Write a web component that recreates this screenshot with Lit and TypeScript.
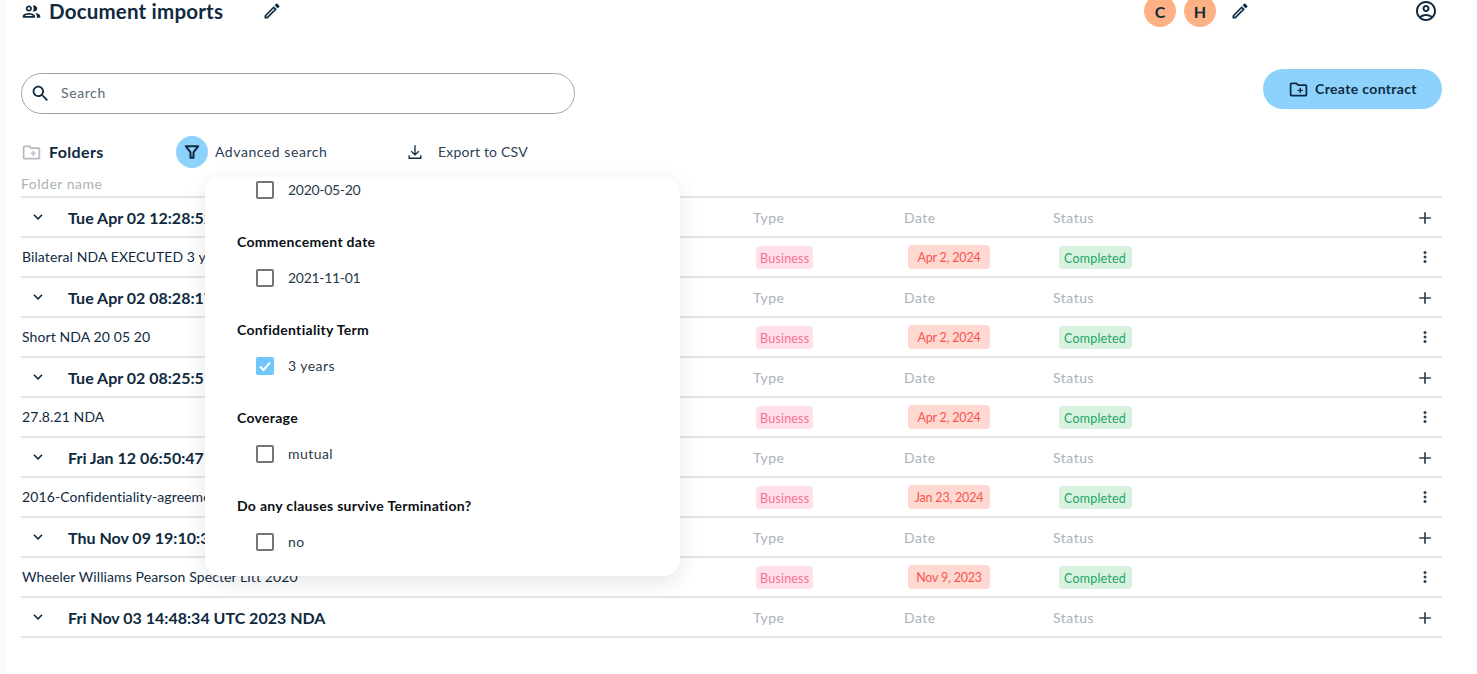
import { LitElement, html, svg, css } from "lit";
import { customElement } from "lit/decorators.js";

const icon = (content: unknown, size = 24) =>
  html`<svg class="icon" width=${size} height=${size} viewBox="0 0 24 24" fill="currentColor">${content}</svg>`;

const PEOPLE = svg`<path d="M9 13.75c-2.34 0-7 1.17-7 3.5V19h14v-1.75c0-2.33-4.66-3.5-7-3.5zM4.34 17c.84-.58 2.87-1.25 4.66-1.25s3.82.67 4.66 1.25H4.34zM9 12c1.93 0 3.5-1.57 3.5-3.5S10.93 5 9 5 5.5 6.57 5.5 8.5 7.07 12 9 12zm0-5c.83 0 1.5.67 1.5 1.5S9.83 10 9 10s-1.5-.67-1.5-1.5S8.17 7 9 7zm7.04 6.81c1.16.84 1.96 1.96 1.96 3.44V19h4v-1.75c0-2.02-3.5-3.17-5.96-3.44zM15 12c1.93 0 3.5-1.57 3.5-3.5S16.93 5 15 5c-.54 0-1.04.13-1.5.35.63.89 1 1.98 1 3.15s-.37 2.26-1 3.15c.46.22.96.35 1.5.35z"/>`;
const PENCIL = svg`<path d="M14.06 9.02l.92.92L5.92 19H5v-.92l9.06-9.06M17.66 3c-.25 0-.51.1-.7.29l-1.83 1.83 3.75 3.75 1.83-1.83c.39-.39.39-1.02 0-1.41l-2.34-2.34c-.2-.2-.45-.29-.71-.29zm-3.6 3.19L3 17.25V21h3.75L17.81 9.94l-3.75-3.75z"/>`;
const SEARCH = svg`<path d="M15.5 14h-.79l-.28-.27C15.41 12.59 16 11.11 16 9.5 16 5.91 13.09 3 9.5 3S3 5.91 3 9.5 5.91 16 9.5 16c1.61 0 3.09-.59 4.23-1.57l.27.28v.79l5 4.99L20.49 19l-4.99-5zm-6 0C7.01 14 5 11.99 5 9.5S7.01 5 9.5 5 14 7.01 14 9.5 11.99 14 9.5 14z"/>`;
const FUNNEL = svg`<path d="M4.5 5h15l-5.7 7.5V19h-3.6v-6.5z" fill="none" stroke="currentColor" stroke-width="2.4" stroke-linejoin="round"/>`;
const DOWNLOAD = svg`<path d="M12 4v11M7.5 11l4.5 4.5 4.5-4.500M5 16v3.5h14V16" fill="none" stroke="currentColor" stroke-width="1.6"/>`;
const FOLDER_PLUS = svg`<path d="M20 6h-8l-2-2H4c-1.1 0-2 .9-2 2v12c0 1.1.9 2 2 2h16c1.1 0 2-.9 2-2V8c0-1.1-.9-2-2-2zm0 12H4V6h5.17l2 2H20v10z"/><path d="M13.2 10h1.6v2.2H17v1.6h-2.2V16h-1.6v-2.2H11v-1.6h2.2z"/>`;
const CHEVRON = svg`<path d="M6.5 9l5.5 5.5L17.5 9" fill="none" stroke="currentColor" stroke-width="2"/>`;
const PLUS = svg`<path d="M19 13h-6v6h-2v-6H5v-2h6V5h2v6h6v2z"/>`;
const DOTS = svg`<circle cx="12" cy="6" r="2"/><circle cx="12" cy="12" r="2"/><circle cx="12" cy="18" r="2"/>`;
const ACCOUNT = svg`<path d="M12 2C6.48 2 2 6.48 2 12s4.48 10 10 10 10-4.48 10-10S17.52 2 12 2zM7.35 18.5C8.66 17.56 10.26 17 12 17s3.34.56 4.65 1.5c-1.31.94-2.91 1.5-4.65 1.5s-3.34-.56-4.65-1.5zm10.79-1.38C16.45 15.8 14.32 15 12 15s-4.45.8-6.14 2.12C4.7 15.73 4 13.95 4 12c0-4.42 3.58-8 8-8s8 3.58 8 8c0 1.95-.7 3.73-1.86 5.12z"/><path d="M12 6c-1.93 0-3.5 1.57-3.5 3.5S10.07 13 12 13s3.5-1.57 3.5-3.5S13.93 6 12 6zm0 5c-.83 0-1.5-.67-1.5-1.5S11.17 8 12 8s1.5.67 1.5 1.5S12.83 11 12 11z"/>`;

const FOLDERS = [
  { title: "Tue Apr 02 12:28:52 UTC 2024 NDA", file: "Bilateral NDA EXECUTED 3 years", date: "Apr 2, 2024" },
  { title: "Tue Apr 02 08:28:17 UTC 2024 NDA", file: "Short NDA 20 05 20", date: "Apr 2, 2024" },
  { title: "Tue Apr 02 08:25:51 UTC 2024 NDA", file: "27.8.21 NDA", date: "Apr 2, 2024" },
  { title: "Fri Jan 12 06:50:47 UTC 2024 NDA", file: "2016-Confidentiality-agreement", date: "Jan 23, 2024" },
  { title: "Thu Nov 09 19:10:33 UTC 2023 NDA", file: "Wheeler Williams Pearson Specter Litt 2020", date: "Nov 9, 2023" },
  { title: "Fri Nov 03 14:48:34 UTC 2023 NDA" },
];

const FILTERS = [
  { options: [{ label: "2020-05-20", numeric: true }] },
  { title: "Commencement date", options: [{ label: "2021-11-01", numeric: true }] },
  { title: "Confidentiality Term", options: [{ label: "3 years", checked: true }] },
  { title: "Coverage", options: [{ label: "mutual" }] },
  { title: "Do any clauses survive Termination?", options: [{ label: "no" }] },
];

@customElement("app-root")
export class AppRoot extends LitElement {
  static styles = css`
    :host {
      display: block;
      position: relative;
      height: 674px;
      overflow: hidden;
      background: #fafafa;
      font-family: "Lato", "Open Sans", sans-serif;
      color: #0f2a3f;
      font-size: 14px;
    }

    .page {
      margin-left: 6px;
      height: 674px;
      box-sizing: border-box;
      padding: 0 35px 0 15px;
      background: #fff;
    }

    .icon {
      display: block;
      flex: none;
    }

    .header {
      display: flex;
      align-items: flex-start;
      height: 22px;
    }

    .header > .icon {
      margin-top: 1px;
    }

    .header h1 {
      margin: 0 0 0 7px;
      font-size: 20.5px;
      line-height: 22px;
      font-weight: 700;
      letter-spacing: 0.2px;
      width: 213px;
    }

    .avatars {
      margin: -5px 0 0 auto;
      display: flex;
      align-items: center;
      gap: 8px;
    }

    .avatar {
      width: 32px;
      height: 32px;
      border-radius: 50%;
      background: #fdb184;
      display: flex;
      align-items: center;
      justify-content: center;
      font-weight: 700;
      font-size: 16px;
    }

    .avatars .icon {
      margin-left: 6px;
    }

    .account {
      margin-left: 164px;
      margin-right: 4px;
      margin-top: -1px;
    }

    .search-row {
      display: flex;
      justify-content: space-between;
      align-items: flex-start;
      margin-top: 47px;
    }

    .search {
      margin-top: 4px;
      width: 554px;
      height: 41px;
      box-sizing: border-box;
      border: 1px solid #a3a3a3;
      border-radius: 21px;
      display: flex;
      align-items: center;
      padding-left: 8px;
      gap: 10px;
      color: #5a6a76;
      letter-spacing: 0.6px;
    }

    .search span {
      margin-top: -2px;
    }

    .search .icon {
      color: #0f2a3f;
    }

    .create {
      width: 179px;
      height: 40px;
      border-radius: 20px;
      background: #8dd2fd;
      display: flex;
      align-items: center;
      justify-content: center;
      gap: 6px;
      font-weight: 700;
      letter-spacing: 0.35px;
    }

    .create span {
      margin-top: -2px;
    }

    .tools {
      display: flex;
      align-items: center;
      height: 32px;
      margin-top: 22px;
    }

    .folders {
      display: flex;
      align-items: center;
      gap: 7px;
      width: 155px;
      font-weight: 700;
      font-size: 16px;
      letter-spacing: 0.35px;
    }

    .folders span {
      margin-top: -2px;
    }

    .folders .icon {
      color: #b3bbc2;
    }

    .filter-btn {
      width: 32px;
      height: 32px;
      border-radius: 50%;
      background: #8dd2fd;
      display: flex;
      align-items: center;
      justify-content: center;
    }

    .tool-label {
      margin-top: -2px;
      letter-spacing: 0.55px;
      color: #2c4153;
    }

    .advanced {
      margin-left: 7px;
      width: 190px;
    }

    .export {
      margin-left: 13px;
      letter-spacing: 0.2px;
    }

    .folder-name {
      margin-top: 7px;
      height: 21px;
      color: #aab3ba;
      letter-spacing: 0.5px;
      line-height: 18px;
    }

    .row {
      display: grid;
      grid-template-columns: 732px 151px 149px 1fr 34px;
      align-items: center;
      height: 38px;
      border-top: 2px solid #e1e4e8;
    }

    .row:last-child {
      border-bottom: 2px solid #e1e4e8;
    }

    .head-title {
      display: flex;
      align-items: center;
      gap: 21px;
      padding-left: 8px;
      font-size: 16px;
      font-weight: 700;
    }

    .col-label {
      color: #a9b2ba;
      letter-spacing: 0.5px;
    }

    .file {
      padding-left: 1px;
      margin-top: -2px;
      letter-spacing: 0.1px;
      white-space: nowrap;
    }

    .action {
      display: flex;
      justify-content: center;
      color: #2a4152;
    }

    .action.plus {
      margin-top: 2px;
    }

    .badge {
      display: inline-block;
      height: 23px;
      line-height: 25px;
      padding: 0 4px;
      border-radius: 4px;
      font-size: 12.5px;
      letter-spacing: 0.2px;
    }

    .badge.type {
      margin-left: 3px;
      background: #ffe0e8;
      color: #f76f93;
    }

    .badge.date {
      margin-left: 4px;
      padding: 0;
      width: 82px;
      height: 24px;
      line-height: 26px;
      text-align: center;
      letter-spacing: -0.2px;
      background: #ffd8d2;
      color: #f5574b;
    }

    .badge.status {
      margin-left: 6px;
      padding: 0 1px 0 0;
      width: 73px;
      box-sizing: border-box;
      text-align: center;
      background: #d8f2e0;
      color: #23a566;
    }

    .popover {
      position: absolute;
      left: 205px;
      top: 177px;
      width: 475px;
      height: 399px;
      box-sizing: border-box;
      padding: 0 32px;
      background: #fff;
      border-radius: 16px;
      box-shadow: 0 6px 20px rgba(40, 50, 60, 0.12);
      display: flex;
      flex-direction: column;
      gap: 29px;
    }

    .group h3 {
      margin: 0 0 13px;
      height: 20px;
      line-height: 20px;
      font-size: 14px;
      font-weight: 700;
      letter-spacing: 0.3px;
      color: #0a0f14;
    }

    .option {
      display: flex;
      align-items: center;
      height: 26px;
      gap: 14px;
      padding-left: 19px;
      color: #2c3a47;
      letter-spacing: 0.45px;
    }

    .option span {
      margin-top: -2px;
    }

    .option .num {
      letter-spacing: -0.3px;
    }

    .box {
      width: 18px;
      height: 18px;
      box-sizing: border-box;
      border: 2px solid #757575;
      border-radius: 2px;
      flex: none;
    }

    .box.checked {
      border: none;
      background: #6ec6fb;
      color: #fff;
    }
  `;

  private renderRows(f: (typeof FOLDERS)[number]) {
    return html`
      <div class="row">
        <div class="head-title">${icon(CHEVRON, 18)}<span>${f.title}</span></div>
        <div class="col-label">Type</div>
        <div class="col-label">Date</div>
        <div class="col-label">Status</div>
        <div class="action plus">${icon(PLUS, 20)}</div>
      </div>
      ${f.file
        ? html`<div class="row">
            <div class="file">${f.file}</div>
            <div><span class="badge type">Business</span></div>
            <div><span class="badge date">${f.date}</span></div>
            <div><span class="badge status">Completed</span></div>
            <div class="action">${icon(DOTS, 18)}</div>
          </div>`
        : ""}
    `;
  }

  render() {
    return html`
      <div class="page">
        <div class="header">
          ${icon(PEOPLE, 21)}
          <h1>Document imports</h1>
          ${icon(PENCIL, 20)}
          <div class="avatars">
            <div class="avatar">C</div>
            <div class="avatar">H</div>
            ${icon(PENCIL, 20)}
          </div>
          <div class="account">${icon(ACCOUNT, 24)}</div>
        </div>

        <div class="search-row">
          <div class="search">${icon(SEARCH, 21)}<span>Search</span></div>
          <div class="create">${icon(FOLDER_PLUS, 21)}<span>Create contract</span></div>
        </div>

        <div class="tools">
          <div class="folders">${icon(FOLDER_PLUS, 21)}<span>Folders</span></div>
          <div class="filter-btn">${icon(FUNNEL, 20)}</div>
          <div class="tool-label advanced">Advanced search</div>
          ${icon(DOWNLOAD, 20)}
          <div class="tool-label export">Export to CSV</div>
        </div>

        <div class="folder-name">Folder name</div>

        ${FOLDERS.map((f) => this.renderRows(f))}
      </div>

      <div class="popover">
        ${FILTERS.map(
          (g) => html`
            <div class="group">
              ${g.title ? html`<h3>${g.title}</h3>` : ""}
              ${g.options.map(
                (o) => html`
                  <div class="option">
                    ${o.checked
                      ? html`<div class="box checked">
                          <svg width="18" height="18" viewBox="0 0 18 18">
                            <path d="M4 9.5l3.5 3.5L14 5.5" fill="none" stroke="currentColor" stroke-width="2" />
                          </svg>
                        </div>`
                      : html`<div class="box"></div>`}
                    <span class=${o.numeric ? "num" : ""}>${o.label}</span>
                  </div>
                `
              )}
            </div>
          `
        )}
      </div>
    `;
  }
}

declare global {
  interface HTMLElementTagNameMap {
    "app-root": AppRoot;
  }
}
